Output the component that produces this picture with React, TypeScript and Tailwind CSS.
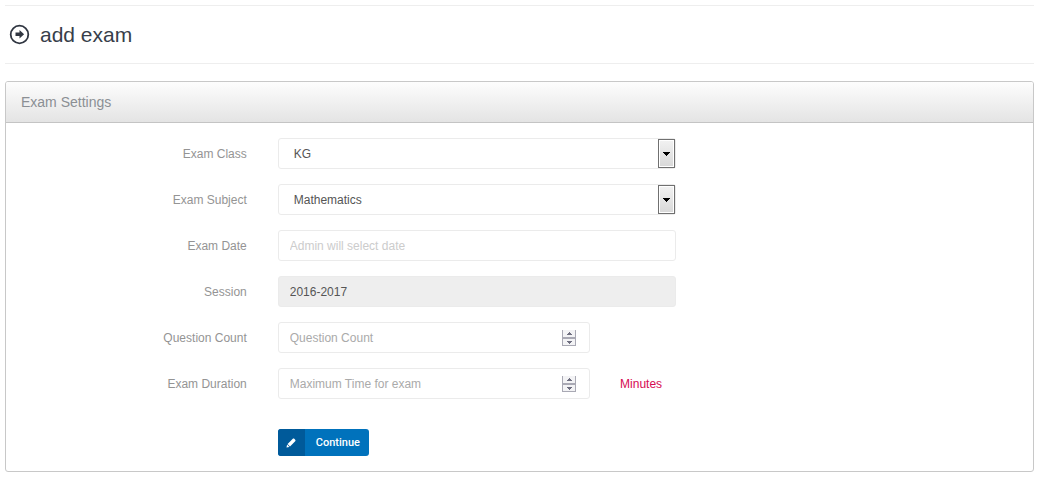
import React, { useRef } from "react";

const control =
  "block h-[31px] w-full rounded-[3px] border border-[#ebebeb] px-[11px] text-xs text-[#555555] outline-none focus:border-[#c8cdd7]";

type RowProps = {
  id?: string;
  label?: string;
  span?: string;
  after?: string;
  children: React.ReactNode;
};

const Row = ({ id, label, span = "col-span-5", after, children }: RowProps) => (
  <div className="grid grid-cols-12">
    <div className="col-span-3 px-4 pt-2 text-right text-xs text-[#949494]">
      {label && <label htmlFor={id}>{label}</label>}
    </div>
    <div className={`${span} px-[15px]`}>{children}</div>
    {after && <div className="col-span-3 px-[15px] pt-2 text-xs text-[#d60b52]">{after}</div>}
  </div>
);

const Select = ({ id, options }: { id: string; options: string[] }) => (
  <div className="relative">
    <select id={id} className={`${control} appearance-none bg-white pl-[15px]`}>
      {options.map((option) => (
        <option key={option}>{option}</option>
      ))}
    </select>
    <span className="pointer-events-none absolute top-px right-px flex h-[29px] w-[17px] items-center justify-center border border-[#707070] bg-linear-to-b from-[#f2f2f2] to-[#d8d8d8] ring-1 ring-inset ring-white">
      <svg width="7" height="4" viewBox="0 0 7 4" shapeRendering="crispEdges">
        <path d="M0 0h7v1H6v1H5v1H4v1H3V3H2V2H1V1H0z" fill="#000" />
      </svg>
    </span>
  </div>
);

const NumberInput = ({ id, placeholder }: { id: string; placeholder: string }) => {
  const input = useRef<HTMLInputElement>(null);
  return (
    <div className="relative">
      <input
        id={id}
        ref={input}
        type="number"
        min={0}
        placeholder={placeholder}
        className={`${control} bg-white placeholder:text-[#aaaaaa] [appearance:textfield] [&::-webkit-inner-spin-button]:appearance-none`}
      />
      <div className="absolute top-2 right-[14px] flex h-4 w-[14px] flex-col border-x border-b border-[#a9a9b4] bg-[#f3f3f5]">
        <button
          type="button"
          tabIndex={-1}
          aria-label="Increase"
          className="flex h-2 items-center justify-center border-b border-[#a9a9b4]"
          onClick={() => input.current?.stepUp()}
        >
          <svg width="5" height="3" viewBox="0 0 5 3" shapeRendering="crispEdges">
            <path d="M2 0h1v1h1v1h1v1H0V2h1V1h1z" fill="#6f6f80" />
          </svg>
        </button>
        <button
          type="button"
          tabIndex={-1}
          aria-label="Decrease"
          className="flex h-[7px] items-center justify-center border-t border-[#a9a9b4]"
          onClick={() => input.current?.stepDown()}
        >
          <svg width="5" height="3" viewBox="0 0 5 3" shapeRendering="crispEdges">
            <path d="M0 0h5v1H4v1H3v1H2V2H1V1H0z" fill="#6f6f80" />
          </svg>
        </button>
      </div>
    </div>
  );
};

const App = () => {
  return (
    <div className="min-h-screen bg-white pt-[5px] pr-2 pb-[10px] pl-[5px] font-['Liberation_Sans',Arial,sans-serif]">
      <div className="border-y border-[#eeeeee] py-4">
        <h1 className="flex h-[25px] items-center gap-[10px] pl-1 text-[21px] text-[#373e4a]">
          <svg width="21" height="21" viewBox="0 0 21 21" fill="none">
            <circle cx="10.5" cy="10.5" r="8.8" stroke="#303641" strokeWidth="1.8" />
            <path d="M6.5 8.5h4V6l4.6 4.3-4.6 4.3v-2.5h-4z" fill="#303641" />
          </svg>
          add exam
        </h1>
      </div>

      <div className="mt-[17px] rounded-[3px] border border-[#c8c8c8]">
        <div className="rounded-t-[2px] border-b border-[#c4c4c4] bg-linear-to-b from-[#fdfdfd] to-[#e4e4e4] px-[15px] py-[10px]">
          <h2 className="text-sm leading-5 text-[#8b8f94]">Exam Settings</h2>
        </div>

        <form className="flex flex-col gap-[15px] py-[15px]" onSubmit={(e) => e.preventDefault()}>
          <Row id="class" label="Exam Class">
            <Select id="class" options={["KG"]} />
          </Row>
          <Row id="subject" label="Exam Subject">
            <Select id="subject" options={["Mathematics"]} />
          </Row>
          <Row id="date" label="Exam Date">
            <input
              id="date"
              type="text"
              placeholder="Admin will select date"
              className={`${control} bg-white placeholder:text-[#cccccc]`}
            />
          </Row>
          <Row id="session" label="Session">
            <input
              id="session"
              type="text"
              readOnly
              value="2016-2017"
              className={`${control} bg-[#eeeeee]`}
            />
          </Row>
          <Row id="count" label="Question Count" span="col-span-4">
            <NumberInput id="count" placeholder="Question Count" />
          </Row>
          <Row id="duration" label="Exam Duration" span="col-span-4" after="Minutes">
            <NumberInput id="duration" placeholder="Maximum Time for exam" />
          </Row>
          <div className="pt-[15px]">
            <Row>
              <button
                type="submit"
                className="flex h-[27px] items-stretch overflow-hidden rounded-[3px] bg-[#0072bc] text-[11px] text-white"
              >
                <span className="flex w-[27px] items-center justify-center bg-[#005a9a]">
                  <svg width="10" height="10" viewBox="0 0 10 10" fill="#fff">
                    <path d="M6.8.8c.5-.5 1-.5 1.5 0l.9.9c.5.5.5 1 0 1.5L4 8.4 1.6 6z" />
                    <path d="M1.1 6.6 3.4 8.9.5 9.5z" />
                  </svg>
                </span>
                <span className="flex items-center pt-[2px] pr-[9px] pl-[11px] font-['Roboto',sans-serif] font-medium">
                  Continue
                </span>
              </button>
            </Row>
          </div>
        </form>
      </div>
    </div>
  );
};

export default App;
